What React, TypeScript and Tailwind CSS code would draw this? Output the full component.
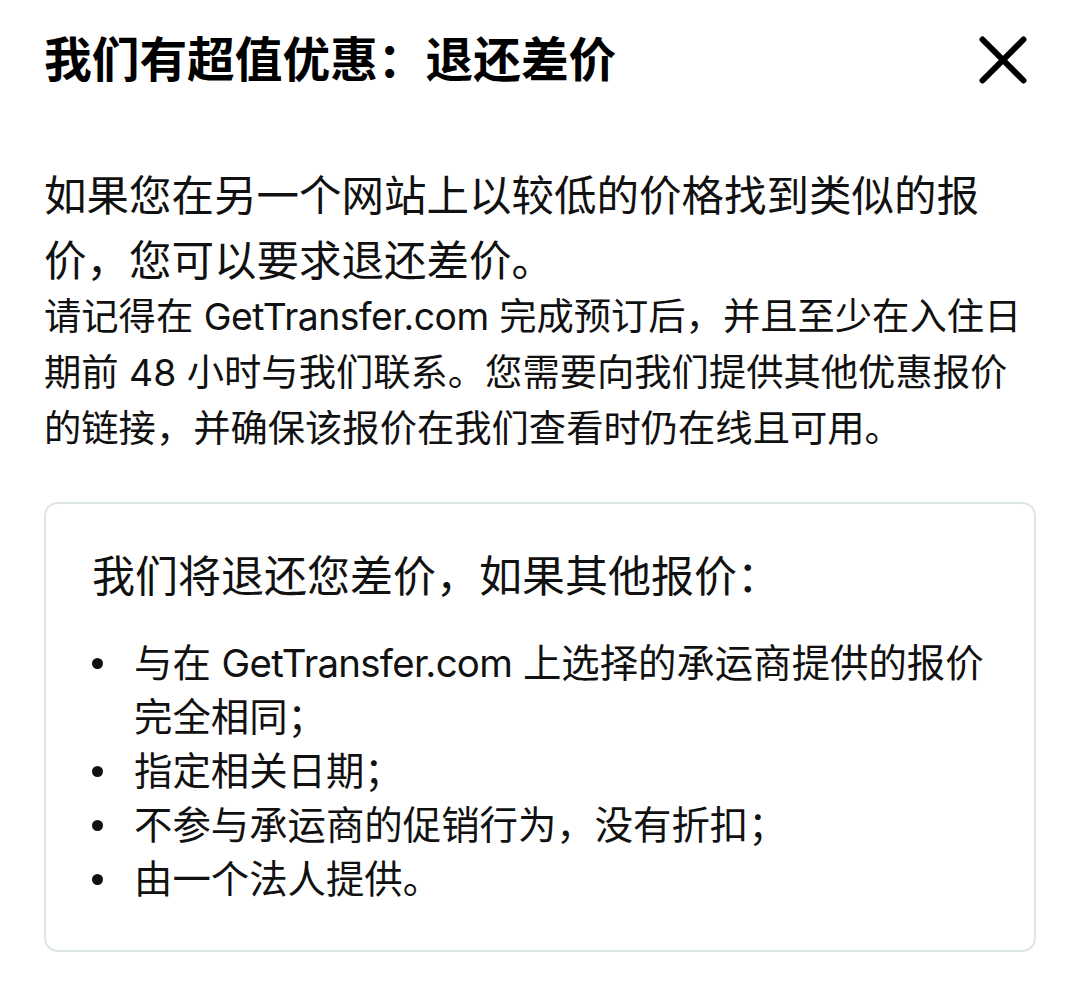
import React from "react";

const font = {
  fontFamily: '"Inter", "Noto Sans CJK SC", sans-serif',
};

const items: string[][] = [
  ["与在 GetTransfer.com 上选择的承运商提供的报价", "完全相同；"],
  ["指定相关日期；"],
  ["不参与承运商的促销行为，没有折扣；"],
  ["由一个法人提供。"],
];

function CloseIcon() {
  return (
    <svg width="48" height="48" viewBox="0 0 48 48" aria-hidden="true">
      <path d="M3.5 3.5 L44.5 44.5 M44.5 3.5 L3.5 44.5" stroke="#000" strokeWidth="6" strokeLinecap="round" />
    </svg>
  );
}

export default function App() {
  return (
    <div className="min-h-[981px] w-[1080px] bg-white px-[44px] text-[#111]" style={font}>
      <header className="flex items-center justify-between pt-[30px]">
        <h1 className="text-[47.7px] font-bold leading-[60px] text-black">我们有超值优惠：退还差价</h1>
        <button className="mr-[9px] flex h-[48px] w-[48px] items-center justify-center">
          <CloseIcon />
        </button>
      </header>

      <p className="mt-[73px] text-[42.5px] leading-[65px]">
        <span className="block whitespace-nowrap">如果您在另一个网站上以较低的价格找到类似的报</span>
        <span className="block whitespace-nowrap">价，您可以要求退还差价。</span>
      </p>
      <p className="-mt-[4px] text-[37.3px] leading-[56px]">
        <span className="block whitespace-nowrap">
          请记得在 <span className="tracking-[-0.5px]">GetTransfer.com</span> 完成预订后，并且至少在入住日
        </span>
        <span className="block whitespace-nowrap">期前 48 小时与我们联系。您需要向我们提供其他优惠报价</span>
        <span className="block whitespace-nowrap">的链接，并确保该报价在我们查看时仍在线且可用。</span>
      </p>

      <section className="mt-[45px] rounded-[14px] border-2 border-[#dde8e0] pb-[44px] pl-[46px] pr-[46px] pt-[45px]">
        <h2 className="text-[43px] leading-[54px]">我们将退还您差价，如果其他报价：</h2>
        <ul className="mt-[33px]">
          {items.map((lines, i) => (
            <li key={i} className="flex text-[38.4px] leading-[54px]">
              <span className="flex h-[54px] w-[42px] shrink-0 items-center">
                <span className="block h-[11px] w-[11px] rounded-full bg-[#111]" />
              </span>
              <span>
                {lines.map((l, j) => (
                  <span key={j} className="block whitespace-nowrap">
                    {l.includes("GetTransfer.com") ? (
                      <>
                        与在 <span className="tracking-[-0.7px]">GetTransfer.com</span> 上选择的承运商提供的报价
                      </>
                    ) : (
                      l
                    )}
                  </span>
                ))}
              </span>
            </li>
          ))}
        </ul>
      </section>
    </div>
  );
}
